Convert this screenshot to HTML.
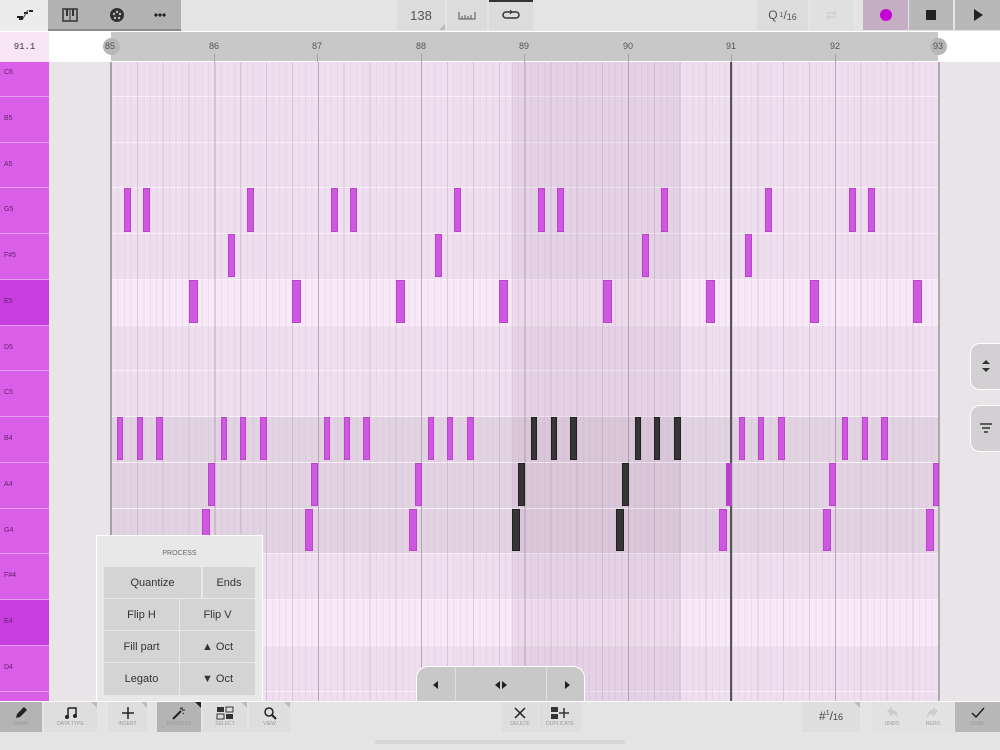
<!DOCTYPE html>
<html><head><meta charset="utf-8"><style>
*{margin:0;padding:0;box-sizing:border-box}
body{width:1000px;height:750px;position:relative;overflow:hidden;background:#e8e4e8;font-family:"Liberation Sans",sans-serif}
.a{position:absolute}
.n{position:absolute;background:#cf58e0;border:1px solid #bb44cc}
.d{position:absolute;background:#363636;border:1px solid #222}
.row{position:absolute;left:111px;width:827px;background:#efdef0;border-top:1px solid #f8f0f8}
.key{position:absolute;left:0;width:49px;background:#d95ee8;border-top:1px solid #e99af2;font-size:7px;color:#6a2070;padding:7px 0 0 4px}
.tb{position:absolute;top:0;height:30px;background:#dcdcdc;display:flex;align-items:center;justify-content:center;color:#555;font-size:13px}
.bb{position:absolute;top:702px;height:30px;background:#dedede;text-align:center;font-size:5px;color:#999}
.bb svg{display:block;margin:4px auto 1px}
.pb{position:absolute;background:#d4d4d4;display:flex;align-items:center;justify-content:center;font-size:11px;color:#333}
.corner{position:absolute;right:0;top:0;width:0;height:0;border-top:6px solid #bbb;border-left:6px solid transparent}
</style></head><body>
<!-- grid area background -->
<div class="a" style="left:49px;top:62px;width:62px;height:640px;background:#e8e4e8"></div>
<div class="row" style="top:62px;height:34px;border-top:none"></div>
<div class="row" style="top:96px;height:46px"></div>
<div class="row" style="top:142px;height:46px"></div>
<div class="row" style="top:187px;height:46px"></div>
<div class="row" style="top:233px;height:46px"></div>
<div class="row" style="top:279px;height:46px;background:#f8e8f8"></div>
<div class="row" style="top:325px;height:46px"></div>
<div class="row" style="top:370px;height:46px"></div>
<div class="row" style="top:416px;height:46px;background:#e2d3e2"></div>
<div class="row" style="top:462px;height:46px;background:#e2d3e2"></div>
<div class="row" style="top:508px;height:46px;background:#e2d3e2"></div>
<div class="row" style="top:553px;height:46px"></div>
<div class="row" style="top:599px;height:46px;background:#f8e8f8"></div>
<div class="row" style="top:645px;height:46px"></div>
<div class="row" style="top:691px;height:46px"></div>
<div class="a" style="left:111px;top:62px;width:827px;height:640px;background:
repeating-linear-gradient(90deg,rgba(150,130,150,.45) 0 1px,transparent 1px 103.4px),
repeating-linear-gradient(90deg,rgba(170,150,170,.25) 0 1px,transparent 1px 25.85px),
repeating-linear-gradient(90deg,rgba(200,175,200,.22) 0 1px,transparent 1px 6.4625px)"></div>
<div class="a" style="left:512px;top:62px;width:169px;height:640px;background:rgba(140,100,140,.1)"></div>
<div class="a" style="left:110px;top:62px;width:2px;height:640px;background:#a8a0a8"></div>
<div class="a" style="left:938px;top:62px;width:2px;height:640px;background:#b0a8b0"></div>
<div class="a" style="left:730px;top:62px;width:2px;height:640px;background:#555"></div>
<!-- top toolbar -->
<div class="a" style="left:0;top:0;width:1000px;height:31px;background:#e4e4e4"></div>
<div class="a" style="left:0;top:0;width:48px;height:31px;background:#ececec"></div>
<svg class="a" style="left:15px;top:8px" width="20" height="14"><path d="M2 9h6M9 5h4M14 3h4M4 11h4" stroke="#222" stroke-width="2"/><path d="M7 12L13 2" stroke="#444"/></svg>
<div class="a" style="left:48px;top:0;width:133px;height:31px;background:#b2b2b2;border-bottom:2px solid #8c8c8c"></div>
<svg class="a" style="left:62px;top:8px" width="16" height="14"><rect x="1" y="1" width="14" height="12" fill="none" stroke="#333" stroke-width="1.5"/><rect x="4" y="1" width="2" height="7" fill="#333"/><rect x="10" y="1" width="2" height="7" fill="#333"/><path d="M8 1v12" stroke="#333"/></svg>
<svg class="a" style="left:109px;top:7px" width="16" height="16"><circle cx="8" cy="8" r="7" fill="#333"/><circle cx="5" cy="7" r="1.2" fill="#bbb"/><circle cx="11" cy="7" r="1.2" fill="#bbb"/><circle cx="8" cy="5" r="1.2" fill="#bbb"/><circle cx="6" cy="11" r="1.2" fill="#bbb"/><circle cx="10" cy="11" r="1.2" fill="#bbb"/></svg>
<div class="a" style="left:154px;top:13px;width:12px;height:4px;background:radial-gradient(circle,#222 1.6px,transparent 1.8px) 0 0/4px 4px"></div>
<div class="tb" style="left:397px;width:48px">138<span class="corner" style="top:24px;border-top:0;border-bottom:6px solid #bbb"></span></div>
<div class="tb" style="left:447px;width:40px"><svg width="18" height="10"><path d="M1 2v7h16V2M4 9V6M7 9V5M10 9V6M13 9V5" stroke="#555" fill="none"/></svg></div>
<div class="tb" style="left:489px;width:44px"><svg width="18" height="12"><path d="M4 3h10a3 3 0 010 6H4a3 3 0 010-6" stroke="#333" fill="none" stroke-width="1.5"/><path d="M8 1l2 2-2 2" stroke="#333" fill="none"/></svg></div>
<div class="a" style="left:489px;top:0;width:44px;height:2px;background:#333"></div>
<div class="tb" style="left:757px;width:51px;font-size:12px">Q <sup style="font-size:7px;margin-left:2px">1</sup>/<span style="font-size:9px;margin-top:4px">16</span></div>
<div class="tb" style="left:810px;width:43px;background:#e0e0e0;color:#ccc">⇄</div>
<div class="tb" style="left:863px;width:45px;background:#c4aec4"><div style="width:12px;height:12px;border-radius:50%;background:#c800d8"></div></div>
<div class="tb" style="left:909px;width:44px;background:#b8b8b8"><div style="width:10px;height:10px;background:#222"></div></div>
<div class="tb" style="left:955px;width:45px;background:#b8b8b8"><svg width="10" height="12"><path d="M1 0L10 6L1 12Z" fill="#222"/></svg></div>
<!-- ruler -->
<div class="a" style="left:0;top:31px;width:1000px;height:31px;background:#fff"></div>
<div class="a" style="left:0;top:32px;width:49px;height:30px;background:#f8e6f8;font-family:'Liberation Mono',monospace;font-size:9px;color:#333;text-align:center;line-height:30px">91.1</div>
<div class="a" style="left:111px;top:32px;width:827px;height:29px;background:#c9c8c9"></div>
<div class="a" style="left:103px;top:38px;width:17px;height:17px;border-radius:50%;background:#b8b6b8"></div>
<div class="a" style="left:930px;top:38px;width:17px;height:17px;border-radius:50%;background:#b8b6b8"></div>
<div class="a" style="top:41px;left:0;width:1000px;height:12px;font-size:9px;color:#555">
<span class="a" style="left:105px">85</span><span class="a" style="left:209px">86</span><span class="a" style="left:312px">87</span><span class="a" style="left:416px">88</span><span class="a" style="left:519px">89</span><span class="a" style="left:623px">90</span><span class="a" style="left:726px">91</span><span class="a" style="left:830px">92</span><span class="a" style="left:933px">93</span></div>
<div class="a" style="top:54px;left:0;width:1000px;height:8px">
<span class="a" style="left:214px;width:1px;height:8px;background:#a8a0a8"></span><span class="a" style="left:317px;width:1px;height:8px;background:#a8a0a8"></span><span class="a" style="left:421px;width:1px;height:8px;background:#a8a0a8"></span><span class="a" style="left:524px;width:1px;height:8px;background:#a8a0a8"></span><span class="a" style="left:628px;width:1px;height:8px;background:#a8a0a8"></span><span class="a" style="left:731px;width:1px;height:8px;background:#a8a0a8"></span><span class="a" style="left:835px;width:1px;height:8px;background:#a8a0a8"></span></div>
<!-- keys -->
<div class="key" style="top:62px;height:34px;border-top:none">C6</div>
<div class="key" style="top:96px;height:46px;padding-top:18px">B5</div>
<div class="key" style="top:142px;height:45px;padding-top:18px">A5</div>
<div class="key" style="top:187px;height:46px;padding-top:18px">G5</div>
<div class="key" style="top:233px;height:46px;padding-top:18px">F#5</div>
<div class="key" style="top:279px;height:46px;padding-top:18px;background:#c83de0">E5</div>
<div class="key" style="top:325px;height:45px;padding-top:18px">D5</div>
<div class="key" style="top:370px;height:46px;padding-top:18px">C5</div>
<div class="key" style="top:416px;height:46px;padding-top:18px">B4</div>
<div class="key" style="top:462px;height:46px;padding-top:18px">A4</div>
<div class="key" style="top:508px;height:45px;padding-top:18px">G4</div>
<div class="key" style="top:553px;height:46px;padding-top:18px">F#4</div>
<div class="key" style="top:599px;height:46px;padding-top:18px;background:#c83de0">E4</div>
<div class="key" style="top:645px;height:46px;padding-top:18px">D4</div>
<div class="key" style="top:691px;height:12px"></div>
<!-- notes G5 -->
<div class="n" style="left:124px;top:188px;width:7px;height:44px"></div>
<div class="n" style="left:143px;top:188px;width:7px;height:44px"></div>
<div class="n" style="left:247px;top:188px;width:7px;height:44px"></div>
<div class="n" style="left:331px;top:188px;width:7px;height:44px"></div>
<div class="n" style="left:350px;top:188px;width:7px;height:44px"></div>
<div class="n" style="left:454px;top:188px;width:7px;height:44px"></div>
<div class="n" style="left:538px;top:188px;width:7px;height:44px"></div>
<div class="n" style="left:557px;top:188px;width:7px;height:44px"></div>
<div class="n" style="left:661px;top:188px;width:7px;height:44px"></div>
<div class="n" style="left:765px;top:188px;width:7px;height:44px"></div>
<div class="n" style="left:849px;top:188px;width:7px;height:44px"></div>
<div class="n" style="left:868px;top:188px;width:7px;height:44px"></div>
<!-- F#5 -->
<div class="n" style="left:228px;top:234px;width:7px;height:43px"></div>
<div class="n" style="left:435px;top:234px;width:7px;height:43px"></div>
<div class="n" style="left:642px;top:234px;width:7px;height:43px"></div>
<div class="n" style="left:745px;top:234px;width:7px;height:43px"></div>
<!-- E5 -->
<div class="n" style="left:189px;top:280px;width:9px;height:43px"></div>
<div class="n" style="left:292px;top:280px;width:9px;height:43px"></div>
<div class="n" style="left:396px;top:280px;width:9px;height:43px"></div>
<div class="n" style="left:499px;top:280px;width:9px;height:43px"></div>
<div class="n" style="left:603px;top:280px;width:9px;height:43px"></div>
<div class="n" style="left:706px;top:280px;width:9px;height:43px"></div>
<div class="n" style="left:810px;top:280px;width:9px;height:43px"></div>
<div class="n" style="left:913px;top:280px;width:9px;height:43px"></div>
<!-- B4 -->
<div class="n" style="left:117px;top:417px;width:6px;height:43px"></div>
<div class="n" style="left:137px;top:417px;width:6px;height:43px"></div>
<div class="n" style="left:156px;top:417px;width:7px;height:43px"></div>
<div class="n" style="left:221px;top:417px;width:6px;height:43px"></div>
<div class="n" style="left:240px;top:417px;width:6px;height:43px"></div>
<div class="n" style="left:260px;top:417px;width:7px;height:43px"></div>
<div class="n" style="left:324px;top:417px;width:6px;height:43px"></div>
<div class="n" style="left:344px;top:417px;width:6px;height:43px"></div>
<div class="n" style="left:363px;top:417px;width:7px;height:43px"></div>
<div class="n" style="left:428px;top:417px;width:6px;height:43px"></div>
<div class="n" style="left:447px;top:417px;width:6px;height:43px"></div>
<div class="n" style="left:467px;top:417px;width:7px;height:43px"></div>
<div class="d" style="left:531px;top:417px;width:6px;height:43px"></div>
<div class="d" style="left:551px;top:417px;width:6px;height:43px"></div>
<div class="d" style="left:570px;top:417px;width:7px;height:43px"></div>
<div class="d" style="left:635px;top:417px;width:6px;height:43px"></div>
<div class="d" style="left:654px;top:417px;width:6px;height:43px"></div>
<div class="d" style="left:674px;top:417px;width:7px;height:43px"></div>
<div class="n" style="left:739px;top:417px;width:6px;height:43px"></div>
<div class="n" style="left:758px;top:417px;width:6px;height:43px"></div>
<div class="n" style="left:778px;top:417px;width:7px;height:43px"></div>
<div class="n" style="left:842px;top:417px;width:6px;height:43px"></div>
<div class="n" style="left:862px;top:417px;width:6px;height:43px"></div>
<div class="n" style="left:881px;top:417px;width:7px;height:43px"></div>
<!-- A4 -->
<div class="n" style="left:208px;top:463px;width:7px;height:43px"></div>
<div class="n" style="left:311px;top:463px;width:7px;height:43px"></div>
<div class="n" style="left:415px;top:463px;width:7px;height:43px"></div>
<div class="d" style="left:518px;top:463px;width:7px;height:43px"></div>
<div class="d" style="left:622px;top:463px;width:7px;height:43px"></div>
<div class="n" style="left:726px;top:463px;width:6px;height:43px;background:#b544c4"></div>
<div class="n" style="left:829px;top:463px;width:7px;height:43px"></div>
<div class="n" style="left:933px;top:463px;width:6px;height:43px"></div>
<!-- G4 -->
<div class="n" style="left:202px;top:509px;width:8px;height:42px"></div>
<div class="n" style="left:305px;top:509px;width:8px;height:42px"></div>
<div class="n" style="left:409px;top:509px;width:8px;height:42px"></div>
<div class="d" style="left:512px;top:509px;width:8px;height:42px"></div>
<div class="d" style="left:616px;top:509px;width:8px;height:42px"></div>
<div class="n" style="left:719px;top:509px;width:8px;height:42px"></div>
<div class="n" style="left:823px;top:509px;width:8px;height:42px"></div>
<div class="n" style="left:926px;top:509px;width:8px;height:42px"></div>
<!-- right side buttons -->
<div class="a" style="left:970px;top:343px;width:32px;height:47px;background:#d2d0d2;border:1px solid #fff;border-radius:10px 0 0 10px"><svg style="margin:14px 0 0 9px" width="12" height="16"><path d="M2 6L6 2L10 6ZM2 10L6 14L10 10Z" fill="#333"/></svg></div>
<div class="a" style="left:970px;top:405px;width:32px;height:47px;background:#d2d0d2;border:1px solid #fff;border-radius:10px 0 0 10px"><svg style="margin:16px 0 0 8px" width="14" height="12"><path d="M1 2h12M3 6h8M5 10h4" stroke="#333" stroke-width="1.5"/></svg></div>
<!-- process popup -->
<div class="a" style="left:96px;top:535px;width:167px;height:167px;background:#e8e8e8;border:1px solid #fff;border-bottom:none"></div>
<div class="a" style="left:96px;top:550px;width:167px;text-align:center;font-size:7px;color:#666">PROCESS</div>
<div class="pb" style="left:104px;top:567px;width:97px;height:31px">Quantize</div>
<div class="pb" style="left:203px;top:567px;width:52px;height:31px">Ends</div>
<div class="pb" style="left:104px;top:599px;width:75px;height:31px">Flip H</div>
<div class="pb" style="left:180px;top:599px;width:75px;height:31px">Flip V</div>
<div class="pb" style="left:104px;top:631px;width:75px;height:31px">Fill part</div>
<div class="pb" style="left:180px;top:631px;width:75px;height:31px">▲ Oct</div>
<div class="pb" style="left:104px;top:663px;width:75px;height:32px">Legato</div>
<div class="pb" style="left:180px;top:663px;width:75px;height:32px">▼ Oct</div>
<!-- bottom nav -->
<div class="a" style="left:416px;top:666px;width:169px;height:36px;background:#e0e0e0;border:1px solid #fff;border-bottom:none;border-radius:12px 12px 0 0;overflow:hidden">
<div class="a" style="left:0;top:0;width:38px;height:36px;background:#c8c8c8;display:flex;align-items:center;justify-content:center"><svg width="6" height="8"><path d="M5 0L0 4L5 8Z" fill="#222"/></svg></div>
<div class="a" style="left:39px;top:0;width:90px;height:36px;background:#c8c8c8;display:flex;align-items:center;justify-content:center"><svg width="12" height="8"><path d="M5 0L0 4L5 8ZM7 0L12 4L7 8Z" fill="#222"/></svg></div>
<div class="a" style="left:130px;top:0;width:40px;height:36px;background:#c8c8c8;display:flex;align-items:center;justify-content:center"><svg width="6" height="8"><path d="M1 0L6 4L1 8Z" fill="#222"/></svg></div>
</div>
<!-- bottom toolbar -->
<div class="a" style="left:0;top:701px;width:1000px;height:49px;background:#e4e4e4;border-top:1px solid #fff"></div>
<div class="bb" style="left:0;width:42px;background:#b4b4b4"><svg width="14" height="14"><path d="M2 12l1-4 7-7 3 3-7 7z" fill="#222"/></svg>DRAW</div>
<div class="bb" style="left:44px;width:53px"><svg width="14" height="14"><path d="M4 2h8v8M4 2v9" stroke="#222" stroke-width="1.5" fill="none"/><circle cx="3" cy="11" r="2" fill="#222"/><circle cx="11" cy="10" r="2" fill="#222"/></svg>DATA TYPE<span class="corner"></span></div>
<div class="bb" style="left:108px;width:39px"><svg width="14" height="14"><path d="M7 1v12M1 7h12" stroke="#222" stroke-width="1.5"/></svg>INSERT<span class="corner"></span></div>
<div class="bb" style="left:157px;width:44px;background:#b4b4b4"><svg width="16" height="14"><path d="M2 13l8-8" stroke="#222" stroke-width="2"/><path d="M11 1v3M14 4h-3M13 8l-1-1M9 2l1 1" stroke="#222"/></svg>PROCESS<span class="corner" style="border-top-color:#222"></span></div>
<div class="bb" style="left:203px;width:44px"><svg width="18" height="14"><rect x="1" y="1" width="7" height="5" fill="#333"/><rect x="10" y="1" width="7" height="5" fill="none" stroke="#333"/><rect x="1" y="8" width="7" height="5" fill="none" stroke="#333"/><rect x="10" y="8" width="7" height="5" fill="#333"/></svg>SELECT<span class="corner"></span></div>
<div class="bb" style="left:249px;width:41px"><svg width="14" height="14"><circle cx="6" cy="6" r="4" stroke="#222" stroke-width="1.5" fill="none"/><path d="M9 9l4 4" stroke="#222" stroke-width="2"/></svg>VIEW<span class="corner"></span></div>
<div class="bb" style="left:502px;width:36px"><svg width="14" height="14"><path d="M2 2l10 10M12 2L2 12" stroke="#222" stroke-width="1.5"/></svg>DELETE</div>
<div class="bb" style="left:539px;width:42px"><svg width="22" height="14"><rect x="2" y="1" width="7" height="5" fill="#333"/><rect x="2" y="8" width="7" height="5" fill="#333"/><path d="M15 2v10M10 7h10" stroke="#333" stroke-width="1.5"/></svg>DUPLICATE</div>
<div class="bb" style="left:802px;width:58px;font-size:12px;color:#444;padding-top:7px">#<sup style="font-size:7px">1</sup>/<span style="font-size:9px">16</span><span class="corner"></span></div>
<div class="bb" style="left:872px;width:40px;background:#e2e2e2"><svg width="14" height="14"><path d="M2 5l5-4v3c5 0 6 4 6 8-1-3-3-4-6-4v3z" fill="#ccc"/></svg>UNDO</div>
<div class="bb" style="left:913px;width:40px;background:#e2e2e2"><svg width="14" height="14"><path d="M12 5L7 1v3C2 4 1 8 1 12c1-3 3-4 6-4v3z" fill="#ccc"/></svg>REDO</div>
<div class="bb" style="left:955px;width:45px;background:#b8b8b8"><svg width="14" height="14"><path d="M1 7l4 4 8-9" stroke="#222" stroke-width="1.5" fill="none"/></svg>DONE</div>
<div class="a" style="left:375px;top:740px;width:250px;height:4px;border-radius:2px;background:#d6d6d6"></div>
</body></html>
